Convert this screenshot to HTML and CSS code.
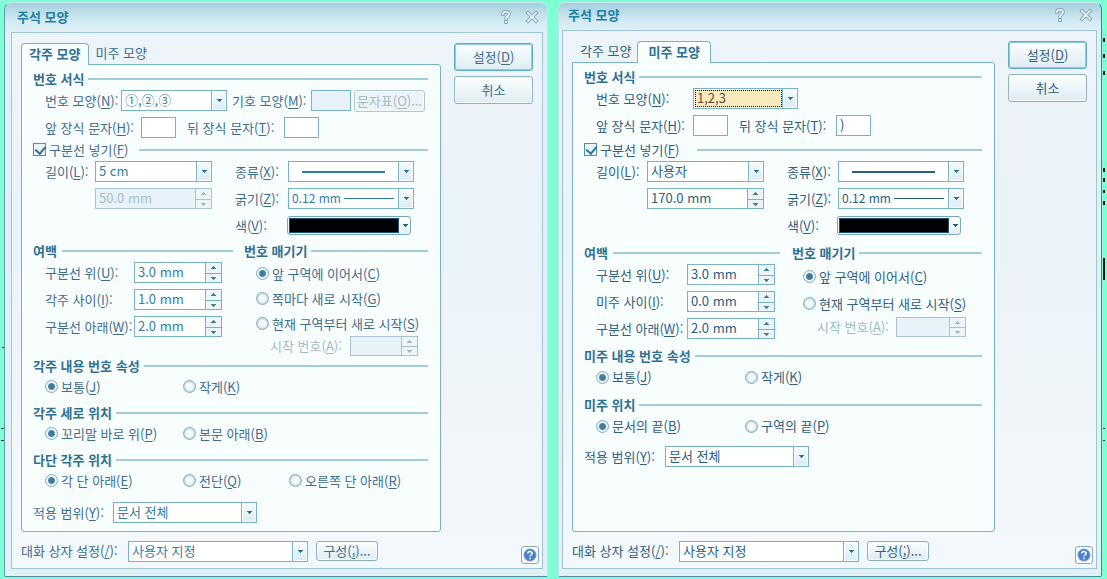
FILE: index.html
```html
<!DOCTYPE html>
<html lang="ko">
<head>
<meta charset="utf-8">
<title>주석 모양</title>
<link rel="stylesheet" href="styles.css">
</head>
<body>
<svg class="marks marks-left" width="4" height="579" aria-hidden="true"><path d="M2 347.500h2M1 428.500h3M1 440.500h3" stroke="#333"/></svg>
<svg class="marks marks-right" width="5" height="579" aria-hidden="true"><path d="M1 38h2v4h-2zM1 54h2v4h-2zM1 71h2v4h-2zM1 168h2v4h-2zM1 178h2v4h-2zM1 190h2v3h-2zM1 201h2v4h-2zM1 258h2v22h-2z" fill="#111"/><path d="M1 428.500h2M1 440.500h2" stroke="#222"/></svg>

<section class="dialog dialog-foot">
  <header class="titlebar">
    <h1>주석 모양</h1>
    <button class="sys" aria-label="도움말"><svg width="14" height="16" viewBox="0 0 14 16"><path class="o" d="M4 5C4 2 10 2 10 5C10 7.500 7 7.500 7 10M7 12.800v.4"/><path class="i" d="M4 5C4 2 10 2 10 5C10 7.500 7 7.500 7 10M7 12.800v.4"/></svg></button>
    <button class="sys" aria-label="닫기"><svg width="14" height="16" viewBox="0 0 14 16"><path class="o" d="M3 4l8 8M11 4l-8 8"/><path class="i" d="M3 4l8 8M11 4l-8 8"/></svg></button>
  </header>
  <div class="frame">
    <div class="content">
      <div class="main">
        <div class="tabs" role="tablist">
          <button class="tab active" role="tab" aria-selected="true">각주 모양</button>
          <button class="tab" role="tab">미주 모양</button>
        </div>
        <div class="panel">
          <h2>번호 서식</h2>
          <div class="row format">
            <label for="a-num">번호 모양(<u>N</u>):</label>
            <span class="combo w-num"><select id="a-num"><option>①,②,③</option></select></span>
            <label class="symbol" for="a-sym">기호 모양(<u>M</u>):</label>
            <input class="box w-sym" id="a-sym" disabled>
            <button class="btn chart" disabled>문자표(<u>O</u>)...</button>
          </div>
          <div class="row deco">
            <label for="a-pre">앞 장식 문자(<u>H</u>):</label>
            <input class="box" id="a-pre">
            <label for="a-post">뒤 장식 문자(<u>T</u>):</label>
            <input class="box" id="a-post">
          </div>
          <div class="rule check"><input type="checkbox" id="a-div" checked><label for="a-div">구분선 넣기(<u>F</u>)</label></div>
          <div class="row line">
            <label for="a-len">길이(<u>L</u>):</label>
            <span class="combo"><select id="a-len"><option>5 cm</option></select></span>
            <label for="a-kind">종류(<u>X</u>):</label>
            <span class="combo preview"><select id="a-kind"><option label=" "></option></select><i class="stroke thick"></i></span>
          </div>
          <div class="row line">
            <span></span>
            <span class="spin off"><input aria-label="길이 값" value="50.0 mm" disabled><span><button disabled aria-label="늘리기"></button><button disabled aria-label="줄이기"></button></span></span>
            <label for="a-wt">굵기(<u>Z</u>):</label>
            <span class="combo preview small"><select id="a-wt"><option>0.12 mm</option></select><i class="stroke thin"></i></span>
          </div>
          <div class="row line">
            <span></span><span></span>
            <label for="a-color">색(<u>V</u>):</label>
            <button class="color" id="a-color"><i></i></button>
          </div>
          <div class="split">
            <div>
              <h2>여백</h2>
              <div class="row margin"><label for="a-m1">구분선 위(<u>U</u>):</label><span class="spin"><input id="a-m1" value="3.0 mm"><span><button aria-label="늘리기"></button><button aria-label="줄이기"></button></span></span></div>
              <div class="row margin"><label for="a-m2">각주 사이(<u>I</u>):</label><span class="spin"><input id="a-m2" value="1.0 mm"><span><button aria-label="늘리기"></button><button aria-label="줄이기"></button></span></span></div>
              <div class="row margin"><label for="a-m3">구분선 아래(<u>W</u>):</label><span class="spin"><input id="a-m3" value="2.0 mm"><span><button aria-label="늘리기"></button><button aria-label="줄이기"></button></span></span></div>
            </div>
            <div>
              <h2>번호 매기기</h2>
              <div class="numbering">
                <div class="radio"><input type="radio" name="a-n" id="a-n1" checked><label for="a-n1">앞 구역에 이어서(<u>C</u>)</label></div>
                <div class="radio"><input type="radio" name="a-n" id="a-n2"><label for="a-n2">쪽마다 새로 시작(<u>G</u>)</label></div>
                <div class="radio"><input type="radio" name="a-n" id="a-n3"><label for="a-n3">현재 구역부터 새로 시작(<u>S</u>)</label></div>
                <div class="start"><label for="a-st">시작 번호(<u>A</u>):</label><span class="spin off"><input id="a-st" disabled><span><button disabled aria-label="늘리기"></button><button disabled aria-label="줄이기"></button></span></span></div>
              </div>
            </div>
          </div>
          <h2 class="attr">각주 내용 번호 속성</h2>
          <div class="radios">
            <div class="radio"><input type="radio" name="a-s" id="a-s1" checked><label for="a-s1">보통(<u>J</u>)</label></div>
            <div class="radio"><input type="radio" name="a-s" id="a-s2"><label for="a-s2">작게(<u>K</u>)</label></div>
          </div>
          <h2 class="place">각주 세로 위치</h2>
          <div class="radios">
            <div class="radio"><input type="radio" name="a-v" id="a-v1" checked><label for="a-v1">꼬리말 바로 위(<u>P</u>)</label></div>
            <div class="radio"><input type="radio" name="a-v" id="a-v2"><label for="a-v2">본문 아래(<u>B</u>)</label></div>
          </div>
          <h2 class="place">다단 각주 위치</h2>
          <div class="radios">
            <div class="radio"><input type="radio" name="a-c" id="a-c1" checked><label for="a-c1">각 단 아래(<u>E</u>)</label></div>
            <div class="radio"><input type="radio" name="a-c" id="a-c2"><label for="a-c2">전단(<u>Q</u>)</label></div>
            <div class="radio"><input type="radio" name="a-c" id="a-c3"><label for="a-c3">오른쪽 단 아래(<u>R</u>)</label></div>
          </div>
          <div class="scope"><label for="a-scope">적용 범위(<u>Y</u>):</label><span class="combo"><select id="a-scope"><option>문서 전체</option></select></span></div>
        </div>
      </div>
      <div class="actions"><button class="btn default">설정(<u>D</u>)</button><button class="btn">취소</button></div>
    </div>
    <footer>
      <label for="a-set">대화 상자 설정(<u>/</u>):</label>
      <span class="combo"><select id="a-set"><option>사용자 지정</option></select></span>
      <button class="btn config">구성(<u>;</u>)...</button>
      <button class="help" aria-label="도움말"><svg width="14" height="14" viewBox="0 0 14 14"><circle cx="7" cy="7" r="6" fill="#4a7fd0" stroke="#6f93cf"/><path d="M4.800 5.500C4.800 3 9.200 3 9.200 5.300C9.200 7 7 7 7 8.600M7 9.800v1.400" fill="none" stroke="#fff" stroke-width="1.500"/></svg></button>
    </footer>
  </div>
</section>

<section class="dialog dialog-end">
  <header class="titlebar">
    <h1>주석 모양</h1>
    <button class="sys" aria-label="도움말"><svg width="14" height="16" viewBox="0 0 14 16"><path class="o" d="M4 5C4 2 10 2 10 5C10 7.500 7 7.500 7 10M7 12.800v.4"/><path class="i" d="M4 5C4 2 10 2 10 5C10 7.500 7 7.500 7 10M7 12.800v.4"/></svg></button>
    <button class="sys" aria-label="닫기"><svg width="14" height="16" viewBox="0 0 14 16"><path class="o" d="M3 4l8 8M11 4l-8 8"/><path class="i" d="M3 4l8 8M11 4l-8 8"/></svg></button>
  </header>
  <div class="frame">
    <div class="content">
      <div class="main">
        <div class="tabs" role="tablist">
          <button class="tab" role="tab">각주 모양</button>
          <button class="tab active" role="tab" aria-selected="true">미주 모양</button>
        </div>
        <div class="panel">
          <h2>번호 서식</h2>
          <div class="row format">
            <label for="b-num">번호 모양(<u>N</u>):</label>
            <span class="combo w-num focused"><select id="b-num"><option>1,2,3</option></select></span>
          </div>
          <div class="row deco">
            <label for="b-pre">앞 장식 문자(<u>H</u>):</label>
            <input class="box" id="b-pre">
            <label for="b-post">뒤 장식 문자(<u>T</u>):</label>
            <input class="box" id="b-post" value=")">
          </div>
          <div class="rule check"><input type="checkbox" id="b-div" checked><label for="b-div">구분선 넣기(<u>F</u>)</label></div>
          <div class="row line">
            <label for="b-len">길이(<u>L</u>):</label>
            <span class="combo"><select id="b-len"><option>사용자</option></select></span>
            <label for="b-kind">종류(<u>X</u>):</label>
            <span class="combo preview"><select id="b-kind"><option label=" "></option></select><i class="stroke thick"></i></span>
          </div>
          <div class="row line">
            <span></span>
            <span class="spin"><input aria-label="길이 값" value="170.0 mm"><span><button aria-label="늘리기"></button><button aria-label="줄이기"></button></span></span>
            <label for="b-wt">굵기(<u>Z</u>):</label>
            <span class="combo preview small"><select id="b-wt"><option>0.12 mm</option></select><i class="stroke thin"></i></span>
          </div>
          <div class="row line">
            <span></span><span></span>
            <label for="b-color">색(<u>V</u>):</label>
            <button class="color" id="b-color"><i></i></button>
          </div>
          <div class="split">
            <div>
              <h2>여백</h2>
              <div class="row margin"><label for="b-m1">구분선 위(<u>U</u>):</label><span class="spin"><input id="b-m1" value="3.0 mm"><span><button aria-label="늘리기"></button><button aria-label="줄이기"></button></span></span></div>
              <div class="row margin"><label for="b-m2">미주 사이(<u>I</u>):</label><span class="spin"><input id="b-m2" value="0.0 mm"><span><button aria-label="늘리기"></button><button aria-label="줄이기"></button></span></span></div>
              <div class="row margin"><label for="b-m3">구분선 아래(<u>W</u>):</label><span class="spin"><input id="b-m3" value="2.0 mm"><span><button aria-label="늘리기"></button><button aria-label="줄이기"></button></span></span></div>
            </div>
            <div>
              <h2>번호 매기기</h2>
              <div class="numbering">
                <div class="radio"><input type="radio" name="b-n" id="b-n1" checked><label for="b-n1">앞 구역에 이어서(<u>C</u>)</label></div>
                <div class="radio"><input type="radio" name="b-n" id="b-n2"><label for="b-n2">현재 구역부터 새로 시작(<u>S</u>)</label></div>
                <div class="start"><label for="b-st">시작 번호(<u>A</u>):</label><span class="spin off"><input id="b-st" disabled><span><button disabled aria-label="늘리기"></button><button disabled aria-label="줄이기"></button></span></span></div>
              </div>
            </div>
          </div>
          <h2 class="attr">미주 내용 번호 속성</h2>
          <div class="radios">
            <div class="radio"><input type="radio" name="b-s" id="b-s1" checked><label for="b-s1">보통(<u>J</u>)</label></div>
            <div class="radio"><input type="radio" name="b-s" id="b-s2"><label for="b-s2">작게(<u>K</u>)</label></div>
          </div>
          <h2 class="place">미주 위치</h2>
          <div class="radios">
            <div class="radio"><input type="radio" name="b-v" id="b-v1" checked><label for="b-v1">문서의 끝(<u>B</u>)</label></div>
            <div class="radio"><input type="radio" name="b-v" id="b-v2"><label for="b-v2">구역의 끝(<u>P</u>)</label></div>
          </div>
          <div class="scope"><label for="b-scope">적용 범위(<u>Y</u>):</label><span class="combo"><select id="b-scope"><option>문서 전체</option></select></span></div>
        </div>
      </div>
      <div class="actions"><button class="btn default">설정(<u>D</u>)</button><button class="btn">취소</button></div>
    </div>
    <footer>
      <label for="b-set">대화 상자 설정(<u>/</u>):</label>
      <span class="combo"><select id="b-set"><option>사용자 지정</option></select></span>
      <button class="btn config">구성(<u>;</u>)...</button>
      <button class="help" aria-label="도움말"><svg width="14" height="14" viewBox="0 0 14 14"><circle cx="7" cy="7" r="6" fill="#4a7fd0" stroke="#6f93cf"/><path d="M4.800 5.500C4.800 3 9.200 3 9.200 5.300C9.200 7 7 7 7 8.600M7 9.800v1.400" fill="none" stroke="#fff" stroke-width="1.500"/></svg></button>
    </footer>
  </div>
</section>
</body>
</html>
```

FILE: styles.css
```css
* { box-sizing: border-box; }

body {
  display: grid;
  grid-template-columns: 1fr 1fr;
  gap: 10px;
  position: relative;
  min-height: 100vh;
  margin: 0;
  padding: 2px 5px 2px 4px;
  background: #7fffd4;
  color: #3f6d8b;
  font: 13px/16px "Noto Sans CJK KR", "Noto Sans", sans-serif;
  white-space: nowrap;
}

button, input, select { font: inherit; color: inherit; margin: 0; }
button { padding: 0; }
u { text-underline-offset: 2px; }
i { display: block; }

.marks { position: absolute; top: 0; }
.marks-left { left: 0; }
.marks-right { right: 0; }

.dialog {
  --edge: #79b2c6;
  --field-text: #2f7fa5;
  display: flex;
  flex-direction: column;
  min-width: 0;
  border: 1px solid #c2e3ec;
  border-bottom-color: #4c8ba3;
  border-radius: 7px 7px 2px 2px;
  background: linear-gradient(#a5cfdf, #d3ebf2 18px, #e2f1f6 32px, #e2f1f6);
}
.dialog-foot { border-left-color: #5d9bb0; padding: 0 4px 7px 6px; }
.dialog-end {
  --field-text: #28617f;
  border-right-color: #4c7f96;
  color: #315f7d;
  padding: 0 4px 7px 3px;
}

.titlebar { display: flex; align-items: center; height: 29px; padding: 0 3px 2px 6px; gap: 12px; }
.dialog-end .titlebar { height: 27px; padding-bottom: 4px; }
h1 { flex: 1; margin: 0; font-size: 13px; line-height: 16px; color: #1f80a3; }
.sys { width: 14px; height: 16px; border: 0; background: none; }
.sys:last-child { margin-right: 1px; }
.sys svg { display: block; overflow: visible; }
.sys path { fill: none; stroke-linecap: square; }
.sys .o { stroke: #7ba3b6; stroke-width: 3.500; }
.sys .i { stroke: #f6fdff; stroke-width: 1.700; }

.frame {
  display: flex;
  flex-direction: column;
  flex: 1;
  border: 1px solid #9cc5d5;
  background: linear-gradient(#edf4fa, #eaf3f9 40%, #eef5f9 60%, #f3f8fc);
  padding: 10px 3px 3px 9px;
}
.content { display: flex; flex: 1; gap: 13px; padding-right: 6px; }
.main { display: flex; flex-direction: column; flex: 1; min-width: 0; }

.tabs { display: flex; height: 22px; margin-bottom: -1px; position: relative; }
.tab { border: 0; background: none; padding: 0 6px 2px; height: 21px; }
.tab.active {
  height: 22px;
  padding: 0 8px 1px 7px;
  border: 1px solid var(--edge);
  border-top-width: 2px;
  border-bottom: 0;
  border-radius: 4px 4px 0 0;
  background: #f8fdfe;
  font-weight: 700;
  color: #2f7092;
}
.dialog-end .tab.active { padding: 0 10px 1px; }
.dialog-end .tab:first-child { padding-left: 8px; }

.panel {
  flex: 1;
  border: 2px solid var(--edge);
  border-left-width: 1px;
  border-bottom-width: 1px;
  border-radius: 0 3px 3px 3px;
  background: #f8fdfe;
  padding: 4px 11px 4px 11px;
}
.panel, .tab.active { border-top-width: 1px; }
.dialog .panel { border-right-width: 1px; padding-top: 5px; padding-right: 12px; }

h2, .rule { display: flex; align-items: center; margin: 0; }
h2 { height: 17px; font-size: 13px; line-height: 16px; color: #2f7092; gap: 4px; }
h2::after, .rule::after {
  content: "";
  flex: 1;
  height: 2px;
  background: #a5cad8;
}
.check { height: 17px; }
.check label { margin: 0 11px 0 3px; }
.dialog-end .check { margin-top: 2px; }
.dialog-end .check label { margin-right: 18px; }

.row { display: grid; align-items: center; height: 27px; padding-left: 12px; }
.format { grid-template-columns: 76px 106px 84px 40px 71px; }
.format .chart { margin-left: 3px; margin-right: -3px; }
.symbol { padding-left: 5px; }
.dialog-end .format { grid-template-columns: 97px 105px; }
.deco { grid-template-columns: 96px 35px 108px 35px; }
.deco label:nth-of-type(2) { padding-left: 11px; }
.dialog-end .deco { grid-template-columns: 97px 35px 108px 35px; }
.line { grid-template-columns: 50px 117px 76px 126px; }
.line label:nth-child(3) { padding-left: 23px; }
.dialog-end .line { grid-template-columns: 51px 117px 74px 126px; }
.margin { grid-template-columns: 89px 88px; }
.dialog-end .margin { grid-template-columns: 91px 88px; }

.combo { display: grid; position: relative; height: 21px; border: 1px solid var(--edge); background: #fff; }
.combo select {
  appearance: none;
  grid-area: 1 / 1;
  width: 100%;
  height: 19px;
  min-width: 0;
  border: 0;
  border-radius: 0;
  outline: 0;
  background: none;
  color: var(--field-text);
  padding: 0 16px 1px 3px;
}
.combo::after {
  content: "";
  position: absolute;
  inset: 0 0 0 auto;
  width: 14px;
  border-left: 1px solid var(--edge);
  background:
    linear-gradient(#27779d, #27779d) center 8px / 5px 1px no-repeat,
    linear-gradient(#27779d, #27779d) center 9px / 3px 1px no-repeat,
    linear-gradient(#27779d, #27779d) center 10px / 1px 1px no-repeat,
    linear-gradient(#f6fbfd, #dbebf4);
  box-shadow: inset 0 0 0 1px #fff;
  pointer-events: none;
}
.small select { font-size: 12px; }
.stroke { grid-area: 1 / 1; align-self: center; pointer-events: none; background: var(--field-text); }
.thick { height: 2px; margin: 0 28px 0 13px; }
.thin { height: 1px; margin: 0 19px 0 55px; }
.focused select { background: #f8eabf; outline: 1px dotted #111; outline-offset: -1px; width: calc(100% - 16px); height: 17px; margin: 1px; padding: 0 2px 1px; color: #6b4c36; }

.box { width: 100%; height: 21px; border: 1px solid var(--edge); background: #fff; padding: 0 3px 2px; color: var(--field-text); }
.box:disabled { background: #e8f2f9; }

.spin { display: flex; height: 21px; border: 1px solid var(--edge); background: #fff; }
.spin > input { flex: 1; min-width: 0; border: 0; background: none; padding: 0 3px 1px; color: var(--field-text); }
.spin > span { display: grid; grid-template-rows: 1fr 1fr; width: 16px; border-left: 1px solid var(--edge); }
.spin button {
  --arrow: #397f9f;
  border: 0;
  background:
    linear-gradient(var(--arrow), var(--arrow)) center 3px / 1px 1px no-repeat,
    linear-gradient(var(--arrow), var(--arrow)) center 4px / 3px 1px no-repeat,
    linear-gradient(var(--arrow), var(--arrow)) center 5px / 5px 1px no-repeat,
    #edf5fa;
}
.spin button + button {
  border-top: 1px solid var(--edge);
  background:
    linear-gradient(var(--arrow), var(--arrow)) center 3px / 5px 1px no-repeat,
    linear-gradient(var(--arrow), var(--arrow)) center 4px / 3px 1px no-repeat,
    linear-gradient(var(--arrow), var(--arrow)) center 5px / 1px 1px no-repeat,
    #edf5fa;
}
.off { --edge: #a9c3cf; background: #e8f2f9; }
.off button { --arrow: #a5b9c2; }
.off > input { color: #a5bfcb; }

.color {
  display: flex;
  align-items: center;
  width: 124px;
  height: 19px;
  margin-left: -1px;
  border: 1px solid #7aa9ba;
  border-radius: 3px;
  background:
    linear-gradient(#1b5f80, #1b5f80) right 2px top 7px / 5px 1px no-repeat,
    linear-gradient(#1b5f80, #1b5f80) right 3px top 8px / 3px 1px no-repeat,
    linear-gradient(#1b5f80, #1b5f80) right 4px top 9px / 1px 1px no-repeat,
    linear-gradient(#fff, #e3eff5);
}
.color i { flex: 1; height: 15px; margin: 0 11px 0 1px; background: #000; border: 1px solid #1b536e; }

.split { display: grid; grid-template-columns: 200px 1fr; gap: 11px; margin-top: 4px; }
.split h2 { height: 16px; }
.split > div:first-child > h2 { gap: 5px; }
.numbering { padding: 2px 0 0 12px; }
.numbering .radio { height: 25px; }
.start { display: grid; grid-template-columns: 80px 68px; align-items: center; height: 19px; padding-left: 14px; color: #a3b9c3; }
.start .spin { height: 20px; }
.dialog-end .split { grid-template-columns: 196px 1fr; gap: 12px; margin-top: 6px; }
.dialog-end .numbering { padding: 2px 0 0 11px; }
.dialog-end .numbering .radio { height: 27px; }
.dialog-end .start { grid-template-columns: 79px 70px; height: 20px; }

input[type="radio"], input[type="checkbox"] { appearance: none; flex: none; width: 13px; height: 13px; }
input[type="radio"] {
  border: 1px solid #86aebf;
  border-radius: 50%;
  background: radial-gradient(#f6fafc 3px, #c7dde6 5px);
}
input[type="radio"]:checked { background: radial-gradient(#3d7aa3 2px, #4d86ab 3px, #f7fcfd 4px, #e4f0f5 5px); }
input[type="checkbox"] {
  border: 1px solid #4f93b1;
  background: #e8f4fa;
}
input[type="checkbox"]:checked::after {
  content: "";
  display: block;
  width: 5px;
  height: 8px;
  margin: 0 0 0 3px;
  border: solid #2c7299;
  border-width: 0 2px 2px 0;
  rotate: 40deg;
}
.radio { display: flex; align-items: center; gap: 3px; }
.radios { display: grid; grid-template-columns: 138px 106px auto; height: 25px; padding-left: 12px; }
.dialog-end .radios { grid-template-columns: 149px auto; height: 26px; }
.attr { margin-top: 2px; }
.place { margin-top: 5px; }
.dialog-end .attr { margin-top: 5px; }
.dialog-end .place { margin-top: 6px; }

.scope { display: grid; grid-template-columns: 80px 144px; align-items: center; height: 27px; margin-top: 6px; }
.dialog-end .scope { grid-template-columns: 81px 144px; margin-top: 4px; }

.actions { display: flex; flex-direction: column; gap: 5px; width: 79px; }
.btn {
  height: 20px;
  border: 1px solid #8fb0be;
  border-radius: 3px;
  background: linear-gradient(#fbfeff, #dfecf3);
  box-shadow: inset 0 0 0 1px #f8fcfe;
}
.actions .btn { height: 28px; }
.btn.default { border-color: #5cadc9; box-shadow: inset 0 0 0 1px #8fcbe0; }
.btn:disabled { height: 22px; color: #a5bac3; border-color: #b2c8d1; background: #edf4f8; }

footer { display: grid; grid-template-columns: 107px 180px 62px 1fr; padding-top: 9px; height: 33px; }
.config { margin-left: 8px; margin-right: -8px; }
.help {
  display: grid;
  place-items: center;
  justify-self: end;
  width: 18px;
  height: 18px;
  margin-top: 5px;
  border: 1px solid #8ba9b8;
  border-radius: 3px;
  background: #f9fcfd;
}
footer label { padding-top: 2px; }
```
